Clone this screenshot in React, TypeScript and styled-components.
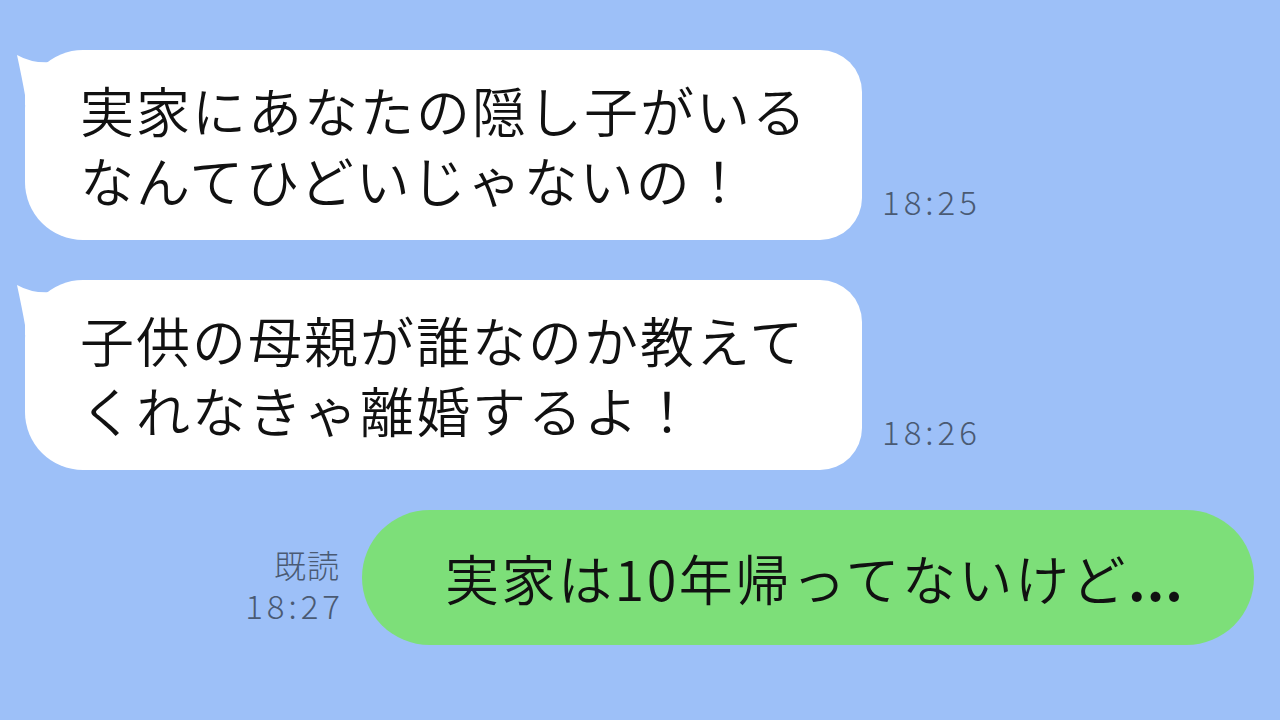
import React from "react";
import styled, { createGlobalStyle } from "styled-components";

const palette = {
  sky: "#9dc0f8",
  white: "#ffffff",
  green: "#7ddf79",
  ink: "#111111",
  meta: "#4a5a73",
};

const GlobalStyle = createGlobalStyle`
  html, body {
    margin: 0;
    padding: 0;
    background: ${palette.sky};
  }
  body {
    font-family: "Noto Sans CJK JP", "Noto Sans", sans-serif;
    font-weight: 300;
  }
`;

const Screen = styled.div`
  width: 1280px;
  height: 720px;
  box-sizing: border-box;
  background: ${palette.sky};
  padding: 50px 26px 0 25px;
  display: flex;
  flex-direction: column;
  gap: 40px;
  overflow: hidden;
`;

const Row = styled.div<{ mine?: boolean }>`
  display: flex;
  align-items: flex-end;
  justify-content: ${(props) => (props.mine ? "flex-end" : "flex-start")};
  gap: ${(props) => (props.mine ? "22px" : "20px")};
`;

const Bubble = styled.div`
  position: relative;
  box-sizing: border-box;
  width: 837px;
  background: ${palette.white};
  color: ${palette.ink};
  border-radius: 58px 42px 42px 58px;
  padding: 25px 0 25px 55px;
  font-size: 54px;
  font-weight: 350;
  line-height: 70px;
  letter-spacing: 2px;
  white-space: nowrap;
`;

const Tail = styled.svg`
  position: absolute;
  left: -10px;
  top: 0;
  width: 45px;
  height: 55px;
`;

const MyBubble = styled.div`
  box-sizing: border-box;
  width: 892px;
  height: 135px;
  background: ${palette.green};
  color: ${palette.ink};
  border-radius: 68px;
  padding: 0 0 0 83px;
  display: flex;
  align-items: center;
  font-size: 54px;
  font-weight: 350;
  letter-spacing: 2.5px;
  white-space: nowrap;
`;

const Dots = styled.span`
  font-weight: 700;
  letter-spacing: 1px;
`;

const Meta = styled.div<{ right?: boolean }>`
  display: flex;
  flex-direction: column;
  align-items: ${(props) => (props.right ? "flex-end" : "flex-start")};
  color: ${palette.meta};
  margin-bottom: ${(props) => (props.right ? "20px" : "19px")};
`;

const ReadMark = styled.span`
  font-size: 32px;
  line-height: 42px;
  letter-spacing: 1px;
`;

const Time = styled.span`
  font-size: 33px;
  line-height: 40px;
  letter-spacing: 4px;
  margin-right: -4px;
`;

const BubbleTail = () => (
  <Tail viewBox="0 0 45 55">
    <path
      d="M2 5 Q18 14 38 12 L42 55 L10 55 L10 45 Q7 28 2 5 Z"
      fill={palette.white}
    />
  </Tail>
);

const messages = [
  { lines: ["実家にあなたの隠し子がいる", "なんてひどいじゃないの！"], time: "18:25" },
  { lines: ["子供の母親が誰なのか教えて", "くれなきゃ離婚するよ！"], time: "18:26" },
];

export default function App() {
  return (
    <>
      <GlobalStyle />
      <Screen>
        {messages.map((m) => (
          <Row key={m.time}>
            <Bubble>
              <BubbleTail />
              {m.lines.map((line) => (
                <div key={line}>{line}</div>
              ))}
            </Bubble>
            <Meta>
              <Time>{m.time}</Time>
            </Meta>
          </Row>
        ))}
        <Row mine>
          <Meta right>
            <ReadMark>既読</ReadMark>
            <Time>18:27</Time>
          </Meta>
          <MyBubble>
            実家は10年帰ってないけど<Dots>...</Dots>
          </MyBubble>
        </Row>
      </Screen>
    </>
  );
}
